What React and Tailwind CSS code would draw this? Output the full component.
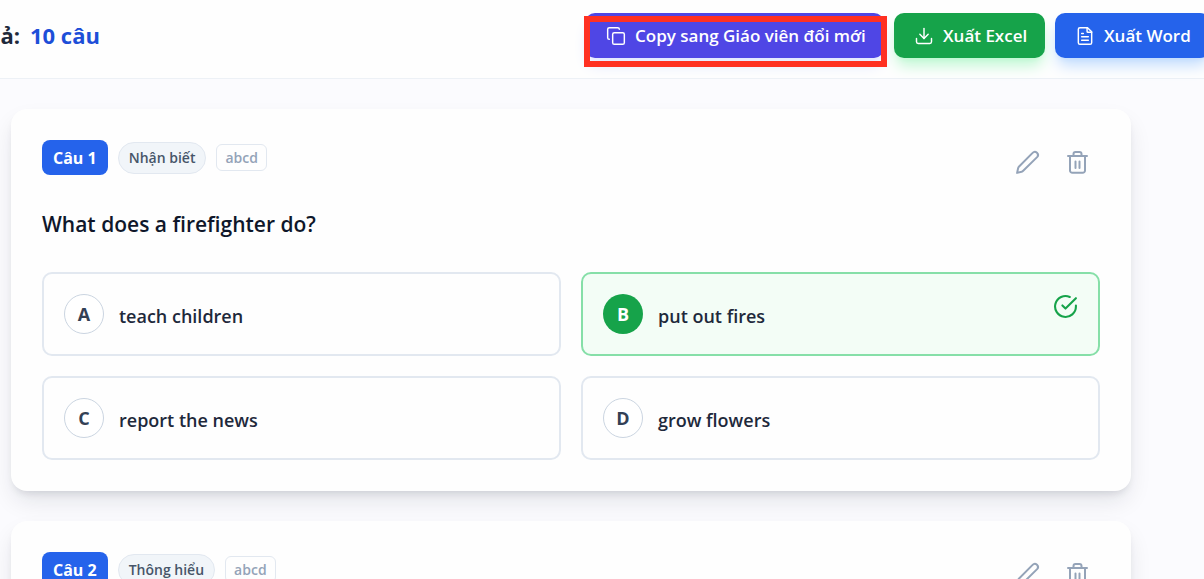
import React from 'react';
import { Copy } from 'lucide-react';
import { FiCheckCircle, FiDownload } from 'react-icons/fi';

const questions = [
  {
    id: 1,
    level: 'Nhận biết',
    type: 'abcd',
    text: 'What does a firefighter do?',
    options: ['teach children', 'put out fires', 'report the news', 'grow flowers'],
    answer: 1,
  },
  {
    id: 2,
    level: 'Thông hiểu',
    type: 'abcd',
    options: [],
  },
];

const FileIcon = () => (
  <svg className="h-5 w-5 shrink-0" viewBox="0 0 24 24" fill="none" stroke="currentColor" strokeWidth="1.75" strokeLinecap="round" strokeLinejoin="round">
    <path d="M15 2H6a2 2 0 0 0-2 2v16a2 2 0 0 0 2 2h12a2 2 0 0 0 2-2V7Z" />
    <path d="M14.5 2v4.5a1 1 0 0 0 1 1H20M8 9h2M8 13h8M8 17h8" />
  </svg>
);

const PencilIcon = () => (
  <svg className="h-[26px] w-[26px]" viewBox="0 0 26 26" fill="none" stroke="currentColor" strokeWidth="2" strokeLinecap="round" strokeLinejoin="round">
    <path d="M18.6 2.9a3 3 0 0 1 4.5 4.2L9.2 20.8a4 4 0 0 1-1.6 1l-4.5 1.1 1-4.7a4 4 0 0 1 1-1.7Z" />
  </svg>
);

const TrashIcon = () => (
  <svg className="h-[26px] w-[26px]" viewBox="0 0 26 26" fill="none" stroke="currentColor" strokeWidth="2" strokeLinecap="round" strokeLinejoin="round">
    <path d="M4 6h19M6 6v14.500a2.300 2.300 0 0 0 2.300 2.300h10.400a2.300 2.300 0 0 0 2.300-2.300V6" />
    <path d="M9.500 6V4a2 2 0 0 1 2-2h4a2 2 0 0 1 2 2v2M11.500 11.500v6.500M15.500 11.500v6.500" />
  </svg>
);

const QuestionCard = ({ question }) => (
  <article className="rounded-2xl bg-[#fefefe] p-[31px] shadow-[0_12px_25px_-3px_rgba(15,23,42,0.11),0_5px_8px_-4px_rgba(15,23,42,0.14)]">
    <div className="flex items-start justify-between">
      <div className="flex items-center gap-[10px]">
        <span className="flex h-[35px] items-center rounded-lg bg-[#2563eb] px-[11px] text-base font-bold text-white">
          Câu {question.id}
        </span>
        <span className="flex h-8 items-center rounded-full border border-[#e2e8f0] bg-[#f1f5f9] px-[10px] text-sm font-semibold text-[#475569]">
          {question.level}
        </span>
        <span className="flex h-[27px] items-center rounded-md border border-[#e2e8f0] px-2 text-sm font-semibold text-[#94a3b8]">
          {question.type}
        </span>
      </div>
      <div className="flex items-center gap-1 text-[#94a3b8]">
        <button type="button" aria-label="Sửa" className="p-[10px]">
          <PencilIcon />
        </button>
        <button type="button" aria-label="Xóa" className="p-[10px]">
          <TrashIcon />
        </button>
      </div>
    </div>

    <h3 className="mt-[22px] mb-8 min-h-8 text-[21px] leading-8 font-semibold text-[#0f172a]">{question.text}</h3>

    <div className="grid grid-cols-2 gap-5">
      {question.options.map((option, i) => {
        const correct = i === question.answer;
        return (
          <div
            key={option}
            className={`flex h-[84px] items-start rounded-[10px] border-2 p-5 ${
              correct ? 'border-[#86dfa8] bg-[#f3fdf6]' : 'border-[#e2e8f0] bg-[#fefefe]'
            }`}
          >
            <span
              className={`flex h-10 w-10 shrink-0 items-center justify-center rounded-full text-lg font-bold ${
                correct ? 'bg-[#16a34a] text-white' : 'border border-[#cbd5e1] bg-white text-[#334155]'
              }`}
            >
              {'ABCD'[i]}
            </span>
            <span className="mt-1 ml-[15px] flex-1 text-lg leading-9 font-semibold text-[#1e293b]">{option}</span>
            {correct && <FiCheckCircle className="h-[25px] w-[25px] text-[#16a34a]" />}
          </div>
        );
      })}
    </div>
  </article>
);

export default function App() {
  return (
    <div className="h-screen overflow-hidden bg-[#fbfbfe] font-['Open_Sans','Noto_Sans',sans-serif]">
      <header className="flex h-[79px] items-start justify-between border-b border-[#edf1f6] bg-[#fefefe] pt-[13px]">
        <h2 className="flex h-[45px] items-center gap-[10px] text-[22px] font-bold text-[#1e293b]">
          <span className="flex w-5 justify-end whitespace-nowrap">Kết quả:</span>
          <span className="whitespace-nowrap text-[#1d4ed8]">10 câu</span>
        </h2>
        <div className="-mr-[6px] flex gap-[10px] text-[17px] font-semibold text-white">
          <div className="relative">
            <button type="button" className="flex h-[45px] w-[299px] items-center gap-[9px] rounded-[10px] bg-[#4f46e5] px-[21px] whitespace-nowrap shadow-lg shadow-[#e0e7ff]">
              <Copy size={20} strokeWidth={1.75} className="shrink-0" />
              Copy sang Giáo viên đổi mới
            </button>
            <div className="pointer-events-none absolute top-[3px] -right-[3px] -bottom-[9px] -left-px border-6 border-[#ff3122]"></div>
          </div>
          <button type="button" className="flex h-[45px] w-[151px] items-center gap-[9px] rounded-[10px] bg-[#16a34a] px-5 whitespace-nowrap shadow-lg shadow-[#bbf7d0]">
            <FiDownload size={20} strokeWidth={1.75} className="shrink-0" />
            Xuất Excel
          </button>
          <button type="button" className="flex h-[45px] w-[155px] items-center gap-[9px] rounded-[10px] bg-[#2563eb] px-5 whitespace-nowrap shadow-lg shadow-[#bfdbfe]">
            <FileIcon />
            Xuất Word
          </button>
        </div>
      </header>

      <main className="flex flex-col gap-[30px] pt-[30px] pr-[73px] pl-[11px]">
        {questions.map((question) => (
          <QuestionCard key={question.id} question={question} />
        ))}
      </main>
    </div>
  );
}
